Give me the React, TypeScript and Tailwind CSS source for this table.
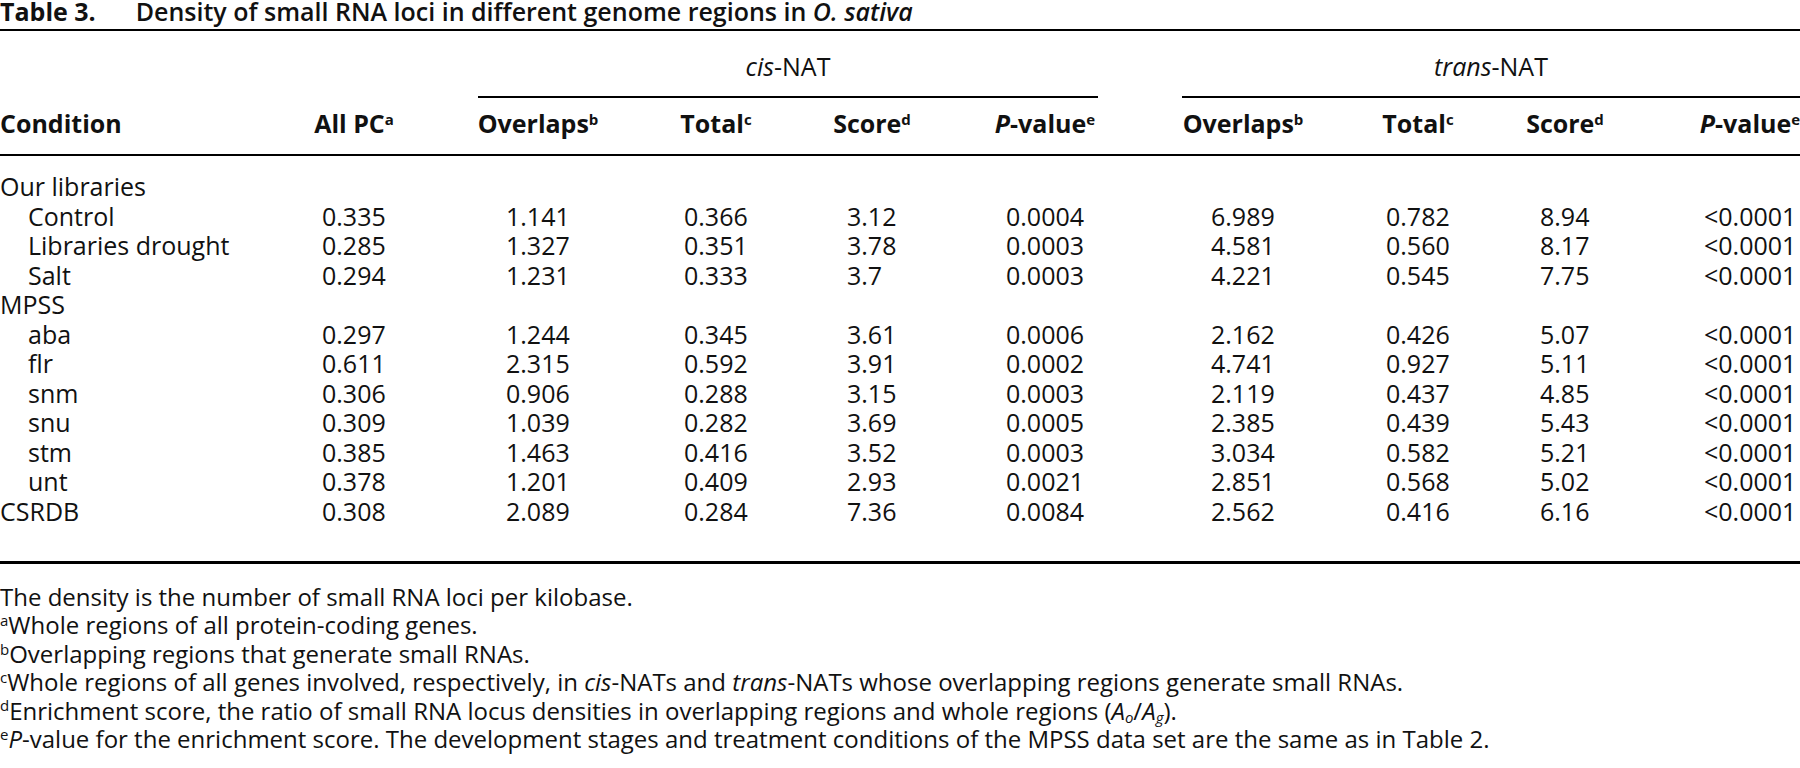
import React from 'react';

const grid = 'grid grid-cols-[270px_168px_200px_156px_156px_190px_206px_144px_150px_220px]';
const boxes = ['w-[64px]', 'w-[64px]', 'w-[64px]', 'w-[50px]', 'w-[78px]', 'w-[64px]', 'w-[64px]', 'w-[50px]', 'w-[92px]'];

type Row = { label: string; group?: boolean; values?: string[] };

const rows: Row[] = [
  { label: 'Our libraries', group: true },
  { label: 'Control', values: ['0.335', '1.141', '0.366', '3.12', '0.0004', '6.989', '0.782', '8.94', '<0.0001'] },
  { label: 'Libraries drought', values: ['0.285', '1.327', '0.351', '3.78', '0.0003', '4.581', '0.560', '8.17', '<0.0001'] },
  { label: 'Salt', values: ['0.294', '1.231', '0.333', '3.7', '0.0003', '4.221', '0.545', '7.75', '<0.0001'] },
  { label: 'MPSS', group: true },
  { label: 'aba', values: ['0.297', '1.244', '0.345', '3.61', '0.0006', '2.162', '0.426', '5.07', '<0.0001'] },
  { label: 'flr', values: ['0.611', '2.315', '0.592', '3.91', '0.0002', '4.741', '0.927', '5.11', '<0.0001'] },
  { label: 'snm', values: ['0.306', '0.906', '0.288', '3.15', '0.0003', '2.119', '0.437', '4.85', '<0.0001'] },
  { label: 'snu', values: ['0.309', '1.039', '0.282', '3.69', '0.0005', '2.385', '0.439', '5.43', '<0.0001'] },
  { label: 'stm', values: ['0.385', '1.463', '0.416', '3.52', '0.0003', '3.034', '0.582', '5.21', '<0.0001'] },
  { label: 'unt', values: ['0.378', '1.201', '0.409', '2.93', '0.0021', '2.851', '0.568', '5.02', '<0.0001'] },
  { label: 'CSRDB', group: true, values: ['0.308', '2.089', '0.284', '7.36', '0.0084', '2.562', '0.416', '6.16', '<0.0001'] },
];

const Sup = ({ children }: { children: React.ReactNode }) => (
  <sup className="text-[15px] top-[-0.55em]">{children}</sup>
);

const PValue = () => (
  <>
    <i>P</i>-value<Sup>e</Sup>
  </>
);

const App = () => {
  return (
    <div className="w-[1800px] h-[768px] overflow-hidden bg-white text-[#111] font-['Open_Sans',sans-serif]">
      {/* Caption */}
      <div className="h-[22px] text-[25px] leading-[22px] whitespace-nowrap">
        <span className="font-bold">Table 3.</span>
        <span className="ml-[40px] font-semibold">
          Density of small RNA loci in different genome regions in <i>O. sativa</i>
        </span>
      </div>

      <div className="w-[1860px] mt-[7px] border-t-2 border-black text-[25px]">
        {/* Spanner row */}
        <div className={grid}>
          <div className="col-span-2" />
          <div className="col-span-4 ml-[40px] mr-[42px] pt-[23px] pb-[17px] border-b-2 border-black text-center leading-[25px] font-medium">
            <i>cis</i>-NAT
          </div>
          <div className="col-span-4 ml-[42px] mr-[60px] pt-[23px] pb-[17px] border-b-2 border-black text-center leading-[25px] font-medium">
            <i>trans</i>-NAT
          </div>
        </div>

        {/* Column headings */}
        <div className={`${grid} pt-[13px] pb-[18px] border-b-2 border-black font-bold leading-[25px] whitespace-nowrap`}>
          <div>Condition</div>
          <div className="text-center">All PC<Sup>a</Sup></div>
          <div className="text-center">Overlaps<Sup>b</Sup></div>
          <div className="text-center">Total<Sup>c</Sup></div>
          <div className="text-center">Score<Sup>d</Sup></div>
          <div className="text-center"><PValue /></div>
          <div className="text-center">Overlaps<Sup>b</Sup></div>
          <div className="text-center">Total<Sup>c</Sup></div>
          <div className="text-center">Score<Sup>d</Sup></div>
          <div className="text-center"><PValue /></div>
        </div>

        {/* Body */}
        <div className="pt-[16px] pb-[35px] border-b-[3px] border-black leading-[29.5px]">
          {rows.map((row) => (
            <div key={row.label} className={`${grid} whitespace-nowrap`}>
              <div className={row.group ? '' : 'pl-[28px]'}>{row.label}</div>
              {row.values?.map((v, i) => (
                <div key={i} className="flex justify-center">
                  <div className={`${boxes[i]} text-left`}>{v}</div>
                </div>
              ))}
            </div>
          ))}
        </div>
      </div>

      {/* Footnotes */}
      <div className="pt-[19px] text-[24px] leading-[28.4px] whitespace-nowrap">
        <p>The density is the number of small RNA loci per kilobase.</p>
        <p><Sup>a</Sup>Whole regions of all protein-coding genes.</p>
        <p><Sup>b</Sup>Overlapping regions that generate small RNAs.</p>
        <p>
          <Sup>c</Sup>Whole regions of all genes involved, respectively, in <i>cis</i>-NATs and <i>trans</i>-NATs whose
          overlapping regions generate small RNAs.
        </p>
        <p>
          <Sup>d</Sup>Enrichment score, the ratio of small RNA locus densities in overlapping regions and whole regions (
          <i>A</i><sub className="text-[15px]"><i>o</i></sub>/<i>A</i><sub className="text-[15px]"><i>g</i></sub>).
        </p>
        <p>
          <Sup>e</Sup><i>P</i>-value for the enrichment score. The development stages and treatment conditions of the MPSS
          data set are the same as in Table 2.
        </p>
      </div>
    </div>
  );
};

export default App;
